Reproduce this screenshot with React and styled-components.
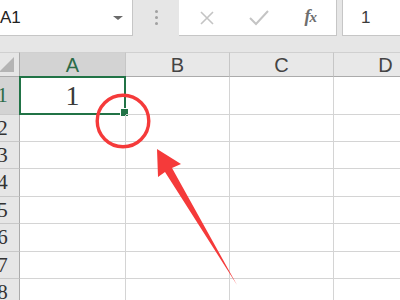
import React from "react";
import styled, { createGlobalStyle } from "styled-components";

const GlobalStyle = createGlobalStyle`
  html, body {
    margin: 0;
    padding: 0;
    background: #ffffff;
    overflow: hidden;
  }
  * { box-sizing: border-box; }
`;

const Screen = styled.div`
  position: relative;
  width: 400px;
  height: 300px;
  overflow: hidden;
  background: #e6e6e6;
  font-family: "Liberation Sans", Arial, sans-serif;
`;

// the window is scrolled a little to the right, so the left edge is cut off
const Viewport = styled.div`
  margin-left: -14px;
  width: 460px;
`;

const FormulaBar = styled.div`
  display: flex;
  height: 36px;
  background: #e6e6e6;
`;

const NameBox = styled.div`
  width: 147px;
  display: flex;
  align-items: center;
  justify-content: space-between;
  padding: 0 9px 0 14px;
  background: #ffffff;
  border-right: 1px solid #c6c6c6;
  border-bottom: 1px solid #c6c6c6;
  font-size: 17px;
  color: #222;
`;

const Caret = styled.span`
  width: 0;
  height: 0;
  border-left: 5px solid transparent;
  border-right: 5px solid transparent;
  border-top: 4px solid #6a6a6a;
`;

const Grip = styled.div`
  width: 46px;
  display: flex;
  flex-direction: column;
  align-items: center;
  justify-content: center;
  gap: 3px;
  padding-bottom: 2px;
`;

const GripDot = styled.span`
  width: 3px;
  height: 3px;
  border-radius: 50%;
  background: #a0a0a0;
`;

const IconBox = styled.div`
  width: 158px;
  display: flex;
  padding-left: 2px;
  background: #ffffff;
  border-right: 1px solid #c6c6c6;
  border-bottom: 1px solid #c6c6c6;
`;

const IconSlot = styled.div`
  width: 52px;
  display: flex;
  align-items: center;
  justify-content: center;
`;

const Fx = styled.span`
  font-family: "Liberation Serif", "Times New Roman", serif;
  font-style: italic;
  font-weight: bold;
  font-size: 18px;
  color: #6e6e6e;
  letter-spacing: -1px;
  padding-bottom: 2px;

  & small {
    font-size: 15px;
  }
`;

const FormulaInput = styled.div`
  flex: 1;
  margin-left: 5px;
  display: flex;
  align-items: center;
  padding-left: 18px;
  background: #ffffff;
  border-left: 1px solid #c6c6c6;
  border-bottom: 1px solid #c6c6c6;
  font-size: 17px;
  color: #3b3b3b;
`;

const Band = styled.div`
  height: 16px;
  background: #e6e6e6;
`;

const Sheet = styled.div`
  display: grid;
  grid-template-columns: 34px 106px 104px 104px 104px;
  grid-template-rows: 25px 38px 27px 27px 28px 27px 28px 27px 28px;
  background: #ffffff;
`;

const Corner = styled.div`
  display: flex;
  align-items: flex-end;
  justify-content: flex-end;
  padding: 0 5px 4px 0;
  background: #e6e6e6;
  border-right: 1px solid #ababab;
  border-bottom: 1px solid #ababab;
  border-top: 1px solid #d0d0d0;
`;

const CornerMark = styled.span`
  width: 0;
  height: 0;
  border-left: 15px solid transparent;
  border-bottom: 15px solid #b4b4b4;
`;

const ColHead = styled.div`
  display: flex;
  align-items: center;
  justify-content: center;
  padding-top: 1px;
  background: ${(p) => (p.$active ? "#d3d3d3" : "#e8e8e8")};
  border-top: 1px solid #d0d0d0;
  border-right: 1px solid #c6c6c6;
  border-bottom: 1px solid #ababab;
  font-size: 20px;
  color: ${(p) => (p.$active ? "#2b6b48" : "#444")};
`;

const RowHead = styled.div`
  display: flex;
  align-items: center;
  justify-content: center;
  background: ${(p) => (p.$active ? "#d3d3d3" : "#e6e6e6")};
  border-right: 1px solid #ababab;
  border-bottom: 1px solid #c8c8c8;
  font-family: "Liberation Serif", "Times New Roman", serif;
  font-size: 21px;
  color: ${(p) => (p.$active ? "#2b6b48" : "#333")};
`;

const Cell = styled.div`
  position: relative;
  display: flex;
  align-items: center;
  justify-content: center;
  padding-top: 1px;
  border-right: 1px solid #d4d4d4;
  border-bottom: 1px solid #d4d4d4;
  font-family: "Liberation Serif", "Times New Roman", serif;
  font-size: 28px;
  color: #3a3a3a;
`;

const Selection = styled.div`
  position: absolute;
  top: -1px;
  left: -1px;
  right: -1px;
  bottom: -1px;
  border: 2px solid #217346;
  pointer-events: none;
`;

const FillHandle = styled.span`
  position: absolute;
  right: -5px;
  bottom: -4px;
  width: 9px;
  height: 9px;
  background: #217346;
  border: 1px solid #ffffff;
`;

const Annotation = styled.svg`
  position: absolute;
  top: 0;
  left: 0;
  pointer-events: none;
`;

const columns = ["A", "B", "C", "D"];
const rows = [1, 2, 3, 4, 5, 6, 7, 8];

export default function App() {
  return (
    <Screen>
      <GlobalStyle />
      <Viewport>
        <FormulaBar>
          <NameBox>
            <span>A1</span>
            <Caret />
          </NameBox>
          <Grip>
            <GripDot />
            <GripDot />
            <GripDot />
          </Grip>
          <IconBox>
            <IconSlot>
              <svg width="14" height="14" viewBox="0 0 14 14">
                <path d="M1 1 L13 13 M13 1 L1 13" stroke="#c4c4c4" strokeWidth="1.6" fill="none" />
              </svg>
            </IconSlot>
            <IconSlot>
              <svg width="20" height="16" viewBox="0 0 20 16">
                <path d="M1 8 L7 14 L19 1" stroke="#c4c4c4" strokeWidth="2" fill="none" />
              </svg>
            </IconSlot>
            <IconSlot>
              <Fx>
                f<small>x</small>
              </Fx>
            </IconSlot>
          </IconBox>
          <FormulaInput>1</FormulaInput>
        </FormulaBar>
        <Band />
        <Sheet>
          <Corner>
            <CornerMark />
          </Corner>
          {columns.map((c) => (
            <ColHead key={c} $active={c === "A"}>
              {c}
            </ColHead>
          ))}
          {rows.map((r) => (
            <React.Fragment key={r}>
              <RowHead $active={r === 1}>{r}</RowHead>
              {columns.map((c) => (
                <Cell key={c}>
                  {r === 1 && c === "A" && (
                    <>
                      1
                      <Selection>
                        <FillHandle />
                      </Selection>
                    </>
                  )}
                </Cell>
              ))}
            </React.Fragment>
          ))}
        </Sheet>
      </Viewport>
      <Annotation width="400" height="300" viewBox="0 0 400 300">
        <circle cx="123" cy="121" r="25.8" fill="none" stroke="#f53a3a" strokeWidth="3.4" />
        <polygon
          points="157,149 181,164 172,168 237,285 165,172 158,177"
          fill="#f53a3a"
        />
      </Annotation>
    </Screen>
  );
}
